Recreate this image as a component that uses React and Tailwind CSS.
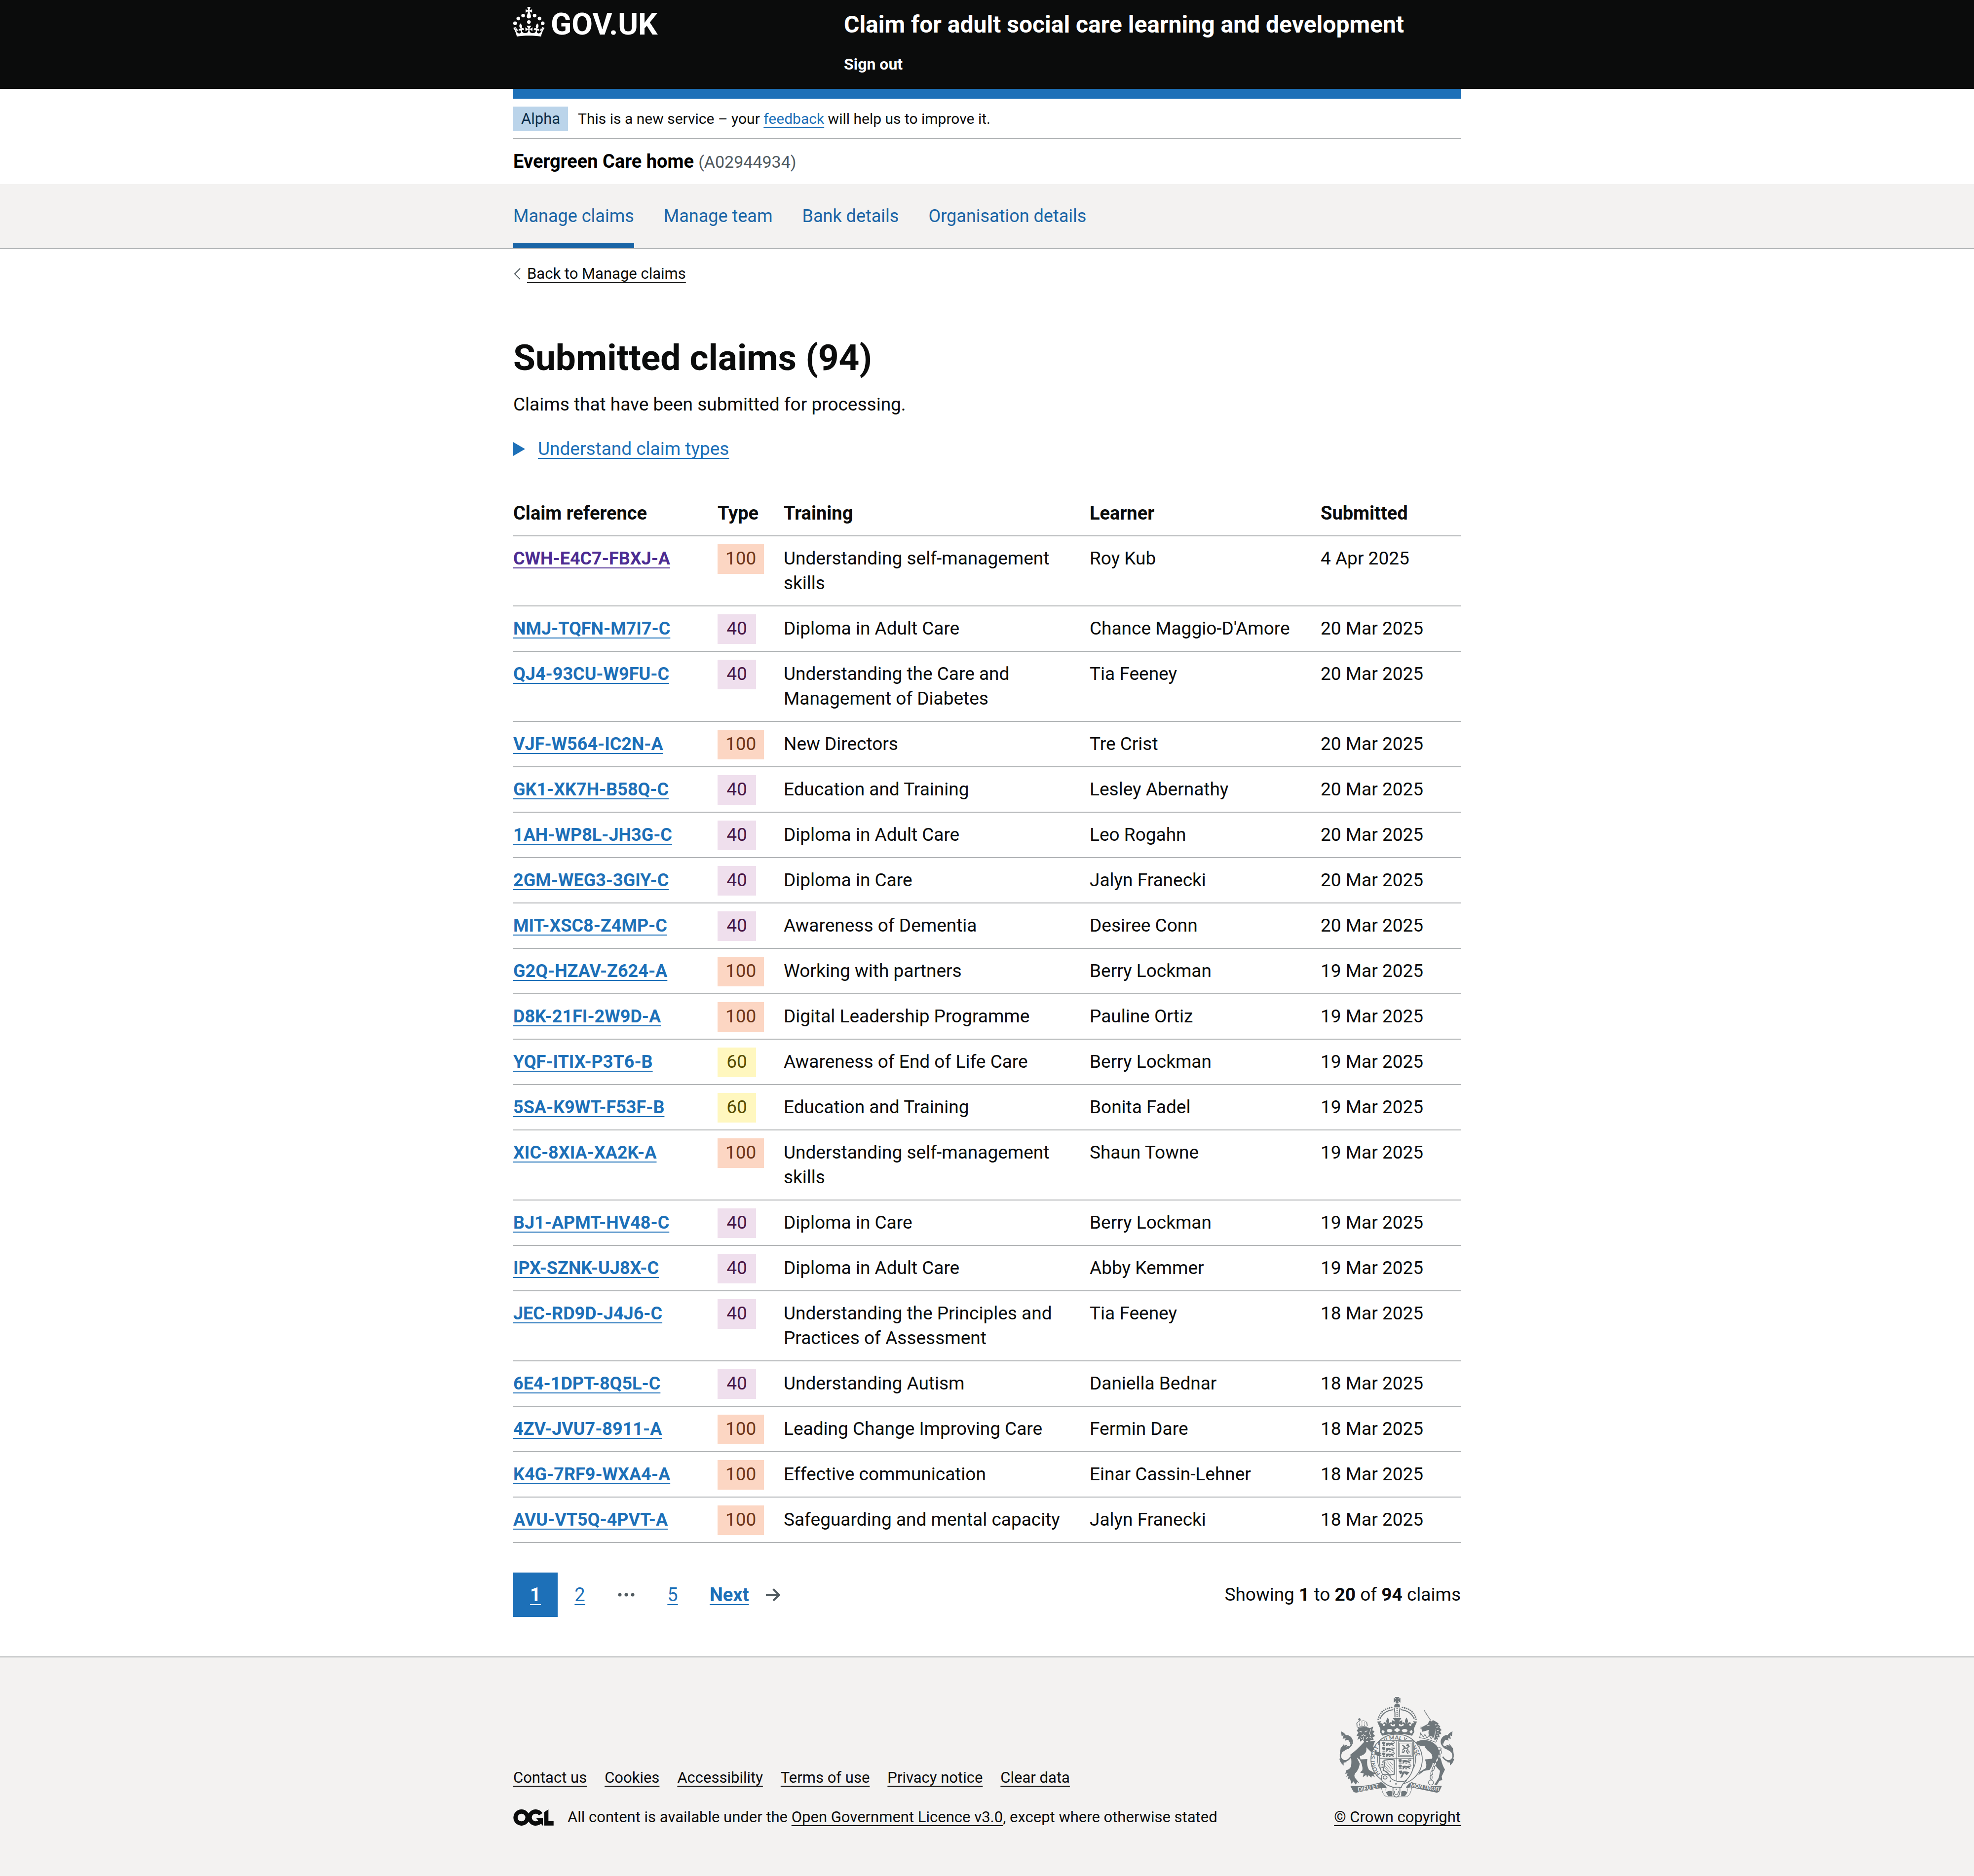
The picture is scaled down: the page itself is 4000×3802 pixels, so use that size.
import React from "react";

const LINK = "underline decoration-2 underline-offset-[6px] [text-decoration-skip-ink:none]";
const WRAP = "mx-auto w-full max-w-[1920px]";

const TAGS = {
  100: "bg-[#fcd6c3] text-[#6e3619]",
  60: "bg-[#fff7bf] text-[#594d00]",
  40: "bg-[#efdfed] text-[#491644]",
};

const CLAIMS = [
  ["CWH-E4C7-FBXJ-A", 100, "Understanding self-management skills", "Roy Kub", "4 Apr 2025", true],
  ["NMJ-TQFN-M7I7-C", 40, "Diploma in Adult Care", "Chance Maggio-D'Amore", "20 Mar 2025"],
  ["QJ4-93CU-W9FU-C", 40, "Understanding the Care and Management of Diabetes", "Tia Feeney", "20 Mar 2025"],
  ["VJF-W564-IC2N-A", 100, "New Directors", "Tre Crist", "20 Mar 2025"],
  ["GK1-XK7H-B58Q-C", 40, "Education and Training", "Lesley Abernathy", "20 Mar 2025"],
  ["1AH-WP8L-JH3G-C", 40, "Diploma in Adult Care", "Leo Rogahn", "20 Mar 2025"],
  ["2GM-WEG3-3GIY-C", 40, "Diploma in Care", "Jalyn Franecki", "20 Mar 2025"],
  ["MIT-XSC8-Z4MP-C", 40, "Awareness of Dementia", "Desiree Conn", "20 Mar 2025"],
  ["G2Q-HZAV-Z624-A", 100, "Working with partners", "Berry Lockman", "19 Mar 2025"],
  ["D8K-21FI-2W9D-A", 100, "Digital Leadership Programme", "Pauline Ortiz", "19 Mar 2025"],
  ["YQF-ITIX-P3T6-B", 60, "Awareness of End of Life Care", "Berry Lockman", "19 Mar 2025"],
  ["5SA-K9WT-F53F-B", 60, "Education and Training", "Bonita Fadel", "19 Mar 2025"],
  ["XIC-8XIA-XA2K-A", 100, "Understanding self-management skills", "Shaun Towne", "19 Mar 2025"],
  ["BJ1-APMT-HV48-C", 40, "Diploma in Care", "Berry Lockman", "19 Mar 2025"],
  ["IPX-SZNK-UJ8X-C", 40, "Diploma in Adult Care", "Abby Kemmer", "19 Mar 2025"],
  ["JEC-RD9D-J4J6-C", 40, "Understanding the Principles and Practices of Assessment", "Tia Feeney", "18 Mar 2025"],
  ["6E4-1DPT-8Q5L-C", 40, "Understanding Autism", "Daniella Bednar", "18 Mar 2025"],
  ["4ZV-JVU7-8911-A", 100, "Leading Change Improving Care", "Fermin Dare", "18 Mar 2025"],
  ["K4G-7RF9-WXA4-A", 100, "Effective communication", "Einar Cassin-Lehner", "18 Mar 2025"],
  ["AVU-VT5Q-4PVT-A", 100, "Safeguarding and mental capacity", "Jalyn Franecki", "18 Mar 2025"],
];

function Crown() {
  return (
    <svg viewBox="0 0 64 60" className="h-[60px] w-[64px] shrink-0" fill="currentColor" aria-hidden="true">
      <circle cx="20" cy="17.6" r="3.7" />
      <circle cx="10.2" cy="23.5" r="3.7" />
      <circle cx="3.7" cy="33.2" r="3.7" />
      <circle cx="31.7" cy="30.6" r="3.7" />
      <circle cx="43.3" cy="17.6" r="3.7" />
      <circle cx="53.2" cy="23.5" r="3.7" />
      <circle cx="59.7" cy="33.2" r="3.7" />
      <path d="M33.1,9.8c.2-.1.3-.3.5-.5l4.6,2.4v-6.8l-4.6,1.5c-.1-.2-.3-.3-.5-.5l1.9-5.9h-6.7l1.9,5.9c-.2.1-.3.3-.5.5l-4.6-1.5v6.8l4.6-2.4c.1.2.3.3.5.5l-2.6,8c-.9,2.8,1.2,5.7,4.1,5.7h0c3,0,5.1-2.9,4.1-5.7l-2.6-8ZM37,37.9s-3.4,3.8-4.1,6.1c2.2,0,4.2-.5,6.4-2.8l-.7,8.5c-2-2.8-4.4-4.1-5.7-3.8.1,3.1.5,6.7,5.8,7.2,3.7.3,6.7-1.5,7-3.8.4-2.6-2-4.3-3.7-1.6-1.4-4.5,2.4-6.1,4.9-3.2-1.9-4.5-1.8-7.7,2.4-10.9,3,4,2.6,7.3-1.2,11.1,2.4-1.3,6.2,0,4,4.6-1.2-2.8-3.7-2.2-4.2.2-.3,1.7.7,3.7,3,4.2,1.9.3,4.7-.9,7-5.9-1.3,0-2.4.7-3.9,1.7l2.4-8c.6,2.3,1.4,3.7,2.2,4.5.6-1.6.5-2.8,0-5.3l5,1.8c-2.6,3.6-5.2,8.7-7.3,17.5-7.4-1.1-15.7-1.7-24.5-1.7h0c-8.8,0-17.1.6-24.5,1.7-2.1-8.9-4.7-13.9-7.3-17.5l5-1.8c-.5,2.5-.6,3.7,0,5.3.8-.8,1.6-2.3,2.2-4.5l2.4,8c-1.5-1-2.6-1.7-3.9-1.7,2.3,5,5.2,6.2,7,5.9,2.3-.4,3.3-2.4,3-4.2-.5-2.4-3-3.1-4.2-.2-2.2-4.6,1.6-6,4-4.6-3.7-3.7-4.2-7.1-1.2-11.1,4.2,3.2,4.3,6.4,2.4,10.9,2.5-2.8,6.3-1.3,4.9,3.2-1.8-2.7-4.1-1-3.7,1.6.3,2.3,3.3,4.1,7,3.8,5.4-.5,5.7-4.2,5.8-7.2-1.3-.2-3.7,1-5.7,3.8l-.7-8.5c2.2,2.3,4.2,2.7,6.4,2.8-.7-2.3-4.1-6.1-4.1-6.1h10.6,0Z" />
    </svg>
  );
}

function LicenceMark() {
  return (
    <svg viewBox="0 0 484 196" className="h-[33px] w-[82px] shrink-0" role="img" aria-label="Open Government Licence">
      <g fill="none" stroke="#0b0c0c" strokeWidth="51">
        <circle cx="98" cy="98" r="72" />
        <path d="M329 59A72 72 0 1 0 322 146" />
      </g>
      <path d="M275 106h80v88h-3l-22-24-31-37zM371 33l51-33v143h62v51H371z" fill="#0b0c0c" />
    </svg>
  );
}

function Passant({ x, y }) {
  return (
    <g transform={`translate(${x} ${y})`}>
      <path d="M4 2 L14 0 L24 3 L22 16 L12 20 L4 12Z M26 8 Q44 4 58 9 Q72 10 80 3 L82 8 Q74 16 66 15 L76 22 L74 27 L60 20 Q46 16 40 19 L34 28 L26 28 L30 20Z M8 22 L22 22 L24 27 L6 27Z M44 22 L52 21 L58 28 L46 28Z" />
      <path d="M60 5 Q66 -2 78 0" fill="none" stroke="#6f777b" strokeWidth="3" />
    </g>
  );
}

function Fleur({ x, y }) {
  return (
    <path
      transform={`translate(${x} ${y})`}
      d="M0 -32 Q10 -18 9 -8 Q8 0 4 6 Q10 -2 18 -4 Q28 -4 26 8 Q22 4 17 8 Q14 18 28 20 L26 30 H-26 L-28 20 Q-14 18 -17 8 Q-22 4 -26 8 Q-28 -4 -18 -4 Q-10 -2 -4 6 Q-8 0 -9 -8 Q-10 -18 0 -32Z"
    />
  );
}

function Tail() {
  return (
    <g>
      <path d="M112 388Q88 424 60 408Q38 388 58 356Q72 344 96 336Q128 312 118 284Q108 260 84 262" fill="none" stroke="#6f777b" strokeWidth="8" />
      <path d="M52 233L56 262L68 258L62 278L80 276L76 290L94 284Q106 296 110 316Q126 290 110 268Q92 250 82 258Q74 242 52 233ZM108 320L84 326L92 316L70 320L72 308L50 336L44 378L56 362Q80 348 108 320ZM42 400Q46 424 68 442L68 424L88 420Q70 410 60 402Z" />
    </g>
  );
}

function Crest() {
  return (
    <svg viewBox="0 0 780 660" className="h-[220px] w-[260px]" fill="#6f777b" aria-hidden="true">
      {/* crown */}
      <path d="M378 24H408L399 39L413 29V59L399 49L403 63H383L387 49L373 59V29L387 39Z" />
      <path d="M376 88Q372 66 393 64Q414 66 410 88Z" />
      <g fill="none" stroke="#6f777b">
        <path d="M278 160Q292 96 368 87M508 160Q494 96 418 87" strokeWidth="10" strokeLinecap="round" strokeDasharray="0 13" />
        <path d="M288 160Q310 108 370 102M498 160Q476 108 416 102" strokeWidth="6" />
        <path d="M375 90Q382 120 380 148M411 90Q404 120 406 148" strokeWidth="6" />
        <path d="M393 94V144" strokeWidth="9" strokeLinecap="round" strokeDasharray="0 12" />
      </g>
      <path d="M367 153H419L404 174L424 166V196L404 188L408 208H378L382 188L362 196V166L382 174Z" />
      <Fleur x={336} y={182} />
      <Fleur x={450} y={182} />
      <path d="M272 174L296 172L290 184Q308 182 306 196L316 208Q393 196 470 208L480 196Q478 182 496 184L490 172L514 174L494 220L498 236L484 260Q393 236 302 260L288 236L292 220Z" />
      <g fill="#f3f2f1">
        <ellipse cx="347" cy="229" rx="17" ry="10" />
        <ellipse cx="439" cy="229" rx="17" ry="10" />
        <path d="M393 212L413 226L393 239L373 226ZM306 224L318 236L308 248L298 236ZM480 224L488 236L478 248L468 236Z" />
      </g>

      {/* lion */}
      <Tail />
      <path d="M190 300Q150 345 108 376Q118 400 114 440Q112 462 84 470L78 492L92 488L84 510L98 504L94 526L106 520L116 552L128 538L142 558L150 542L164 548L140 520Q128 505 138 490Q162 465 166 430L148 392L172 410L166 384Q215 372 205 330L226 350Q250 374 272 380L270 366L296 386L290 370L300 362L262 352Q236 330 262 290Z" />
      <path d="M165 404L212 402Q206 440 222 468L262 490L250 496L258 512L240 502L236 516L220 500L210 514L206 498L184 512L190 490L168 484L182 470Q186 440 165 404Z" />
      <path d="M158 214L148 230L158 240L146 262L160 260L152 286L168 276L168 296L184 284L196 302L212 290L226 306L232 286L252 288L244 270L260 262L246 248L256 232L242 228L248 204L228 214Q192 198 158 214Z" />
      <g fill="none" stroke="#6f777b">
        <path d="M152 212Q180 200 210 208M150 206L148 182M212 200L208 178" strokeWidth="5" />
        <path d="M150 182Q160 166 178 170Q200 166 208 180M164 202V178M179 200V172M195 200V176" strokeWidth="4" strokeDasharray="5 3" />
        <path d="M163 153V172M156 160H172" strokeWidth="5" />
      </g>
      <path d="M164 232L180 238M196 238L212 230M176 262L188 254L202 262M190 266V284M170 272L180 278M204 278L216 268M224 240L232 262M232 220L228 236M240 276L226 270" fill="none" stroke="#f3f2f1" strokeWidth="4" />

      {/* unicorn */}
      <g transform="translate(782 0) scale(-1 1)">
        <Tail />
      </g>
      <path d="M592 166L578 190L546 206L530 206L546 213L532 218L546 223L544 236L564 232L586 224Q580 250 590 262L618 268L626 228Q624 190 604 178Z" />
      <path d="M600 172L612 166L628 174L646 186L640 190L656 204L650 210L664 226L654 232L662 250L648 252L652 270L638 270L632 290L620 272Q640 220 600 172Z" />
      <path d="M632 190L624 196M644 206L632 210M648 226L636 228M648 244L636 244M642 262L632 258M576 200L590 196" stroke="#f3f2f1" strokeWidth="4" />
      <path d="M557 106L598 168" stroke="#6f777b" strokeWidth="5" strokeDasharray="7 2" />
      <path d="M536 244L530 272Q580 280 628 300L640 276L622 284L612 262L600 280L588 258L574 274L562 252L552 268Z" fill="#f3f2f1" stroke="#6f777b" strokeWidth="4" />
      <path d="M512 296Q550 276 598 294Q640 316 650 350Q644 380 660 404Q668 440 684 466L664 508L668 530L650 534L634 562L620 558L646 516L654 474Q628 450 620 426Q600 430 606 400Q612 370 580 352Q560 330 560 322Q530 316 514 340L512 370L522 402L502 402L494 372L498 330L540 316L500 322Z" />
      <path d="M562 404L608 400Q616 440 590 468L556 474L522 500L530 480L566 458Q578 440 562 404Z" />
      <g fill="#f3f2f1" stroke="#6f777b" strokeWidth="4">
        <ellipse cx="650" cy="340" rx="11" ry="7" />
        <ellipse cx="656" cy="360" rx="6" ry="12" />
        <ellipse cx="648" cy="384" rx="6" ry="12" />
        <ellipse cx="636" cy="408" rx="6" ry="13" transform="rotate(24 636 408)" />
        <ellipse cx="624" cy="434" rx="6" ry="13" transform="rotate(24 624 434)" />
        <ellipse cx="613" cy="460" rx="6" ry="13" transform="rotate(20 613 460)" />
        <ellipse cx="604" cy="486" rx="6" ry="13" transform="rotate(10 604 486)" />
        <ellipse cx="600" cy="513" rx="6" ry="13" />
        <circle cx="599" cy="545" r="15" />
      </g>

      {/* garter */}
      <ellipse cx="390" cy="404" rx="156" ry="153" fill="#f3f2f1" stroke="#6f777b" strokeWidth="5" />
      <ellipse cx="390" cy="404" rx="116" ry="113" fill="none" stroke="#6f777b" strokeWidth="4" />
      <path id="garter-line" d="M291 492A127 124 0 1 1 462 505" fill="none" />
      <text fontFamily="Lato, sans-serif" fontSize="34" fontWeight="700">
        <textPath href="#garter-line">HONI SOIT QUI MAL Y PENSE</textPath>
      </text>

      {/* shield */}
      <path d="M287 288H494V430Q490 520 390 572Q290 520 287 430Z" fill="#f3f2f1" stroke="#6f777b" strokeWidth="5" />
      <path d="M391 288V568M287 397H494" stroke="#6f777b" strokeWidth="4" />
      <Passant x={298} y={296} />
      <Passant x={298} y={329} />
      <Passant x={298} y={362} />
      <g fill="none" stroke="#6f777b">
        <rect x="400" y="297" width="86" height="90" strokeWidth="4" />
        <rect x="408" y="305" width="70" height="74" strokeWidth="3" />
        <path d="M424 318L438 326L434 340L446 334L458 342L450 354L460 370M436 342L424 348M440 348L432 362L422 358M448 320L460 314L466 326L454 332M462 350L468 362" strokeWidth="7" />
        <path d="M312 410Q350 400 376 408V494L348 500Q326 474 306 470M312 410Q320 440 308 470M306 420H300M306 436H298M306 452H298" strokeWidth="7" />
        <path d="M322 424L366 480M334 418L368 462M348 416L368 440M318 440L352 484M318 456L342 482" strokeWidth="3" />
      </g>
      <Passant x={398} y={402} />
      <Passant x={398} y={436} />
      <path d="M402 474L422 472L424 488L412 494ZM426 478Q450 474 468 482L452 500L436 488L424 512L412 518L420 498Z" />
      <path d="M258 352L298 366L290 372L300 384L276 384L256 372Z" />

      {/* belt, buckle and compartment */}
      <path d="M326 574Q316 600 340 628H364V600Q344 590 326 604M456 574Q466 600 440 628H418V600Q438 590 456 604" />
      <path d="M296 560Q300 620 330 632H450Q480 620 484 560" fill="none" stroke="#6f777b" strokeWidth="3" />
      <path d="M368 560V604Q372 632 388 633Q406 632 410 604V560Z" fill="#f3f2f1" stroke="#6f777b" strokeWidth="5" />
      <path d="M376 596Q376 618 388 619Q400 618 402 596" fill="none" stroke="#6f777b" strokeWidth="4" />
      <path d="M298 520Q290 496 320 494Q350 496 356 520Q400 552 452 532Q424 550 418 576Q400 570 370 574Q330 562 312 544Q298 536 298 520Z" fill="#f3f2f1" stroke="#6f777b" strokeWidth="5" />
      <ellipse cx="320" cy="514" rx="12" ry="10" fill="none" stroke="#6f777b" strokeWidth="5" />
      <circle cx="352" cy="537" r="5" />
      <circle cx="386" cy="553" r="5" />
      <circle cx="388" cy="586" r="4" />

      {/* motto ribbon */}
      <path d="M108 564Q200 574 296 542Q330 562 330 580L300 578Q230 588 146 606Q128 606 124 594Z" />
      <path d="M666 564Q574 574 480 542Q452 556 446 580L476 574Q546 588 632 606Q648 606 652 594Z" />
      <g fill="#f3f2f1" fontFamily="Lato, sans-serif" fontSize="34" fontWeight="700">
        <text transform="translate(156 600) rotate(-10)">DIEU ET</text>
        <text transform="translate(472 570) rotate(9)" fontSize="31">MON DROIT</text>
      </g>
    </svg>
  );
}

const NAV = ["Manage claims", "Manage team", "Bank details", "Organisation details"];
const FOOTER = ["Contact us", "Cookies", "Accessibility", "Terms of use", "Privacy notice", "Clear data"];

export default function App() {
  return (
    <div className="flex min-h-screen flex-col bg-white font-['Roboto',sans-serif] text-[37px] leading-[50px] text-[#0b0c0c]">
      <header className="bg-[#0b0c0c] text-white">
        <div className={`${WRAP} flex`}>
          <a href="#home" aria-label="GOV.UK" className="flex w-[670px] items-end gap-3 self-start pt-[14px]">
            <Crown />
            <span className="text-[62px] leading-[50px] font-bold">GOV.UK</span>
          </a>
          <div className="pt-5 pb-[30px]">
            <a href="#service" className="block text-[48px] leading-[60px] font-bold">
              Claim for adult social care learning and development
            </a>
            <a href="#sign-out" className="mt-[30px] block w-fit text-[32px] leading-[40px] font-bold">
              Sign out
            </a>
          </div>
        </div>
      </header>

      <div className={WRAP}>
        <div className="h-5 bg-[#1d70b8]" />
        <div className="flex items-center gap-5 border-b-2 border-[#b1b4b6] pt-4 pb-[14px] text-[30px] leading-[40px]">
          <strong className="bg-[#bbd4ea] px-4 py-[5px] text-[31px] font-normal text-[#0c2d4a]">Alpha</strong>
          <span>
            This is a new service – your{" "}
            <a href="#feedback" className={`${LINK} text-[#1d70b8]`}>feedback</a> will help us to improve it.
          </span>
        </div>
        <p className="py-5">
          <span className="text-[38px] font-bold text-black">Evergreen Care home</span>{" "}
          <span className="text-[34px] leading-[40px] text-[#505a5f]">(A02944934)</span>
        </p>
      </div>

      <nav className="border-b-2 border-[#b1b4b6] bg-[#f3f2f1] text-[36px]" aria-label="Service">
        <ul className={`${WRAP} flex gap-[60px]`}>
          {NAV.map((item, i) => (
            <li
              key={item}
              className={`border-b-[10px] pt-10 pb-[30px] ${i === 0 ? "border-[#1a65a6]" : "border-transparent"}`}
            >
              <a href="#nav" aria-current={i === 0 ? "page" : undefined} className="text-[#1a65a6]">{item}</a>
            </li>
          ))}
        </ul>
      </nav>

      <div className={`${WRAP} pt-[30px]`}>
        <a href="#back" className="flex w-fit items-center gap-3 text-[31px] leading-[40px]">
          <svg viewBox="0 0 16 24" className="h-6 w-4" fill="none" stroke="#505a5f" strokeWidth="2" aria-hidden="true">
            <path d="M14 1L3 12L14 23" />
          </svg>
          <span className={LINK}>Back to Manage claims</span>
        </a>
      </div>

      <main className={`${WRAP} pt-[110px] pb-20`}>
        <h1 className="text-[73px] leading-[80px] font-bold">Submitted claims (94)</h1>
        <p className="mt-[30px]">Claims that have been submitted for processing.</p>
        <details className="mt-10 mb-[60px]">
          <summary className="flex cursor-pointer list-none items-center gap-[26px] text-[#1d70b8]">
            <svg viewBox="0 0 24 28" className="h-7 w-6" fill="currentColor" aria-hidden="true">
              <path d="M0 0L24 14L0 28Z" />
            </svg>
            <span className={LINK}>Understand claim types</span>
          </summary>
        </details>

        <table className="w-full table-fixed border-collapse text-left">
          <colgroup>
            <col className="w-[414px]" />
            <col className="w-[134px]" />
            <col className="w-[620px]" />
            <col className="w-[468px]" />
            <col />
          </colgroup>
          <thead>
            <tr className="border-b-2 border-[#b1b4b6] text-[38px]">
              {["Claim reference", "Type", "Training", "Learner", "Submitted"].map((h) => (
                <th key={h} scope="col" className="py-5 font-bold">{h}</th>
              ))}
            </tr>
          </thead>
          <tbody>
            {CLAIMS.map(([ref, type, training, learner, date, visited]) => (
              <tr key={ref} className="border-b-2 border-[#b1b4b6] align-top">
                <td className="py-5">
                  <a
                    href="#claim"
                    className={`${LINK} text-[36px] font-bold ${visited ? "text-[#4c2c92]" : "text-[#1d70b8]"}`}
                  >
                    {ref}
                  </a>
                </td>
                <td className="pt-4 pb-3">
                  <strong className={`block w-fit min-w-[78px] px-4 pt-1 pb-1.5 text-center font-normal ${TAGS[type]}`}>
                    {type}
                  </strong>
                </td>
                <td className="py-5 pr-10">{training}</td>
                <td className="py-5">{learner}</td>
                <td className="py-5">{date}</td>
              </tr>
            ))}
          </tbody>
        </table>

        <div className="mt-[60px] flex items-center justify-between">
          <nav aria-label="Pagination">
            <ul className="flex items-center text-center text-[38px] text-[#1d70b8]">
              <li className="w-[90px] bg-[#1d70b8] py-5 font-bold text-white">
                <a href="#page" aria-current="page" className={LINK}>1</a>
              </li>
              <li className="w-[90px]">
                <a href="#page" className={LINK}>2</a>
              </li>
              <li className="w-[98px]" aria-label="More pages">
                <svg viewBox="0 0 34 8" className="mx-auto h-2 w-[34px]" fill="#505a5f" aria-hidden="true">
                  <circle cx="4" cy="4" r="3.5" />
                  <circle cx="17" cy="4" r="3.5" />
                  <circle cx="30" cy="4" r="3.5" />
                </svg>
              </li>
              <li className="w-[90px]">
                <a href="#page" className={LINK}>5</a>
              </li>
              <li>
                <a href="#next" className="flex items-center gap-[34px] pl-[30px] font-bold">
                  <span className={LINK}>Next</span>
                  <svg viewBox="0 0 15 13" className="h-[26px] w-[30px]" fill="#505a5f" aria-hidden="true">
                    <path d="m8.107-0.0078-1.4136 1.414 4.2926 4.293h-12.986v2h12.896l-4.1855 3.9766 1.377 1.4492 6.7441-6.4062-6.7246-6.7266z" />
                  </svg>
                </a>
              </li>
            </ul>
          </nav>
          <p>
            Showing <b>1</b> to <b>20</b> of <b>94</b> claims
          </p>
        </div>
      </main>

      <footer className="grow border-t-2 border-[#b1b4b6] bg-[#f3f2f1] text-[31px] leading-[40px]">
        <div className={`${WRAP} flex items-end justify-between pt-18 pb-[100px]`}>
          <div>
            <ul className="mb-10 flex gap-9">
              {FOOTER.map((item) => (
                <li key={item}>
                  <a href="#footer" className={LINK}>{item}</a>
                </li>
              ))}
            </ul>
            <div className="flex items-center gap-7">
              <LicenceMark />
              <span>
                All content is available under the{" "}
                <a href="#licence" className={LINK}>Open Government Licence v3.0</a>, except where otherwise stated
              </span>
            </div>
          </div>
          <a href="#copyright" className="flex flex-col items-end gap-3">
            <Crest />
            <span className={LINK}>© Crown copyright</span>
          </a>
        </div>
      </footer>
    </div>
  );
}
